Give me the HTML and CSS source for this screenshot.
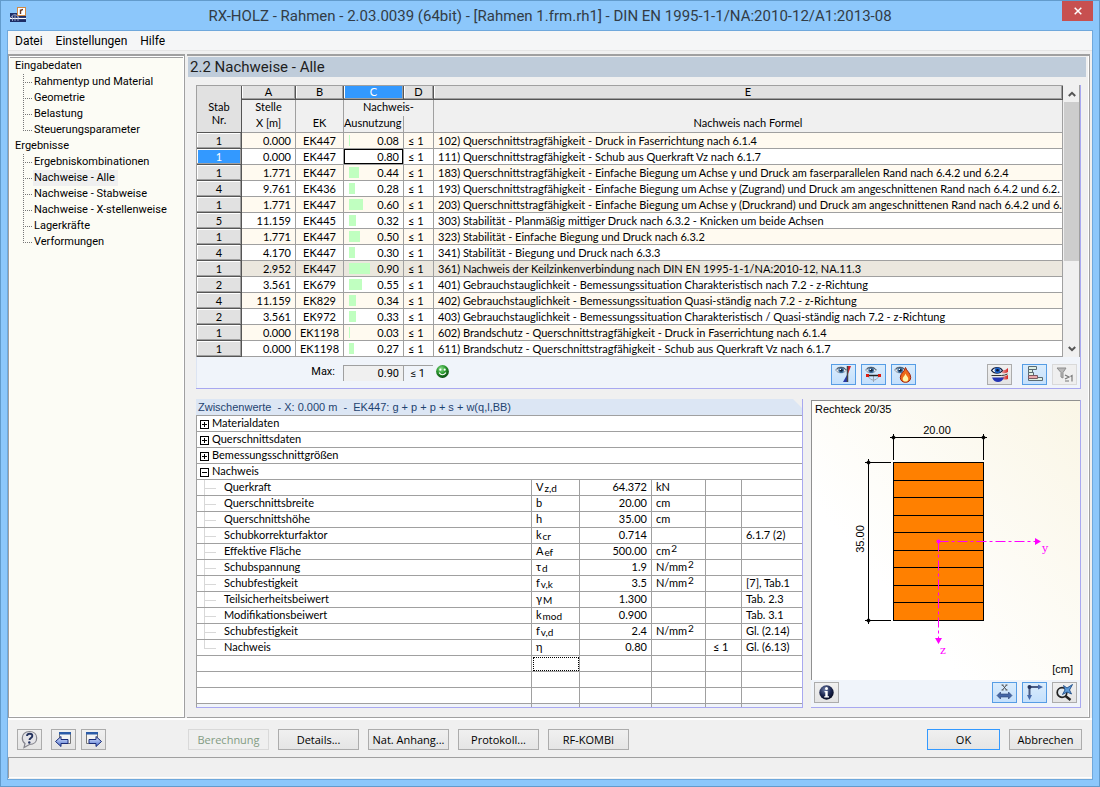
FILE: index.html
```html
<!DOCTYPE html>
<html lang="de">
<head>
<meta charset="utf-8">
<meta name="viewport" content="width=device-width, initial-scale=1">
<title>RX-HOLZ - Rahmen</title>
<link rel="stylesheet" href="styles.css">
</head>
<body>
<svg class="defs" aria-hidden="true">
  <defs>
    <linearGradient id="redfade" x1="0" y1="0" x2="1" y2="0"><stop offset="0" stop-color="#e9b4b4"/><stop offset="1" stop-color="#d62222"/></linearGradient>
    <radialGradient id="ball" cx=".4" cy=".3" r=".7"><stop offset="0" stop-color="#8fe08f"/><stop offset=".5" stop-color="#2c9a30"/><stop offset="1" stop-color="#0b4d10"/></radialGradient>
    <radialGradient id="navy" cx=".4" cy=".3" r=".7"><stop offset="0" stop-color="#6d7da8"/><stop offset=".6" stop-color="#1b2650"/><stop offset="1" stop-color="#060a20"/></radialGradient>
    <linearGradient id="arrow" x1="0" y1="0" x2="0" y2="1"><stop offset="0" stop-color="#e4ecff"/><stop offset="1" stop-color="#4a6fd0"/></linearGradient>
    <g id="eye">
      <path d="M0 4.500C2 1.300 8 .8 10 4.500 8 7.600 2 7.600 0 4.500z" fill="#e6eaee" stroke="#7d8794" stroke-width=".8"/>
      <circle cx="5.200" cy="4.300" r="2.800" fill="#3d6f9e"/><circle cx="5.200" cy="4.300" r="1.400" fill="#111d33"/><circle cx="4.400" cy="3.400" r=".7" fill="#fff"/>
      <path d="M0 3.500C2 .6 8 .3 10.300 4" fill="none" stroke="#3c4654" stroke-width="1"/>
    </g>
  </defs>
</svg>
<div class="window">
  <header class="titlebar">
    <svg class="app-icon" viewBox="0 0 16 16" aria-hidden="true">
      <rect y="6" width="16" height="9" fill="#1c2c66"/><path d="M0 11.500h16" stroke="#fff" stroke-width="1.200"/><path d="M0 11Q5 4 9 11M5 8v6M8 9v5M2.500 9v5" fill="none" stroke="#aeb8d8" stroke-width=".8"/>
      <rect x="7.500" y=".5" width="8" height="8" fill="#fff" stroke="#d08a45"/><path d="M10.500 7V2.500M10.500 4q1-1.500 2.500-1.500" fill="none" stroke="#6b3a24" stroke-width="1.400"/>
    </svg>
    <h1>RX-HOLZ - Rahmen - 2.03.0039 (64bit) - [Rahmen 1.frm.rh1] - DIN EN 1995-1-1/NA:2010-12/A1:2013-08</h1>
    <button class="close" type="button" aria-label="Schließen"><svg viewBox="0 0 8 8" width="8" height="8"><path d="M.7.7l6.600 6.600M7.300.7L.7 7.300" stroke="#fff" stroke-width="1.500"/></svg></button>
  </header>
  <div class="client">
    <nav class="menubar"><button type="button">Datei</button><button type="button">Einstellungen</button><button type="button">Hilfe</button></nav>
    <div class="workspace">
      <nav class="tree">
        <ul>
          <li><a href="#">Eingabedaten</a>
            <ul><li><a href="#">Rahmentyp und Material</a></li><li><a href="#">Geometrie</a></li><li><a href="#">Belastung</a></li><li><a href="#">Steuerungsparameter</a></li></ul></li>
          <li><a href="#">Ergebnisse</a>
            <ul><li><a href="#">Ergebniskombinationen</a></li><li><a href="#" class="current">Nachweise - Alle</a></li><li><a href="#">Nachweise - Stabweise</a></li><li><a href="#">Nachweise - X-stellenweise</a></li><li><a href="#">Lagerkräfte</a></li><li><a href="#">Verformungen</a></li></ul></li>
        </ul>
      </nav>
      <main class="main">
        <h2>2.2 Nachweise - Alle</h2>
        <div class="panels">
          <section class="results">
            <div class="grid-wrap">
              <table class="checks">
                <colgroup><col class="c-stab"><col class="c-x"><col class="c-ek"><col class="c-use"><col class="c-lim"><col></colgroup>
                <thead>
                  <tr class="letters"><th class="stab" rowspan="3">Stab<br>Nr.</th><th>A</th><th>B</th><th class="active">C</th><th>D</th><th>E</th></tr>
                  <tr class="sub"><th>Stelle</th><th></th><th colspan="2">Nachweis-</th><th></th></tr>
                  <tr class="sub last"><th>X [m]</th><th>EK</th><th class="use">Ausnutzung</th><th></th><th>Nachweis nach Formel</th></tr>
                </thead>
                <tbody>
                  <tr><th>1</th><td>0.000</td><td>EK447</td><td><div class="ratio"><i style="width:1px"></i>0.08</div></td><td>≤ 1</td><td>102) Querschnittstragfähigkeit - Druck in Faserrichtung nach 6.1.4</td></tr>
                  <tr><th class="active">1</th><td>0.000</td><td>EK447</td><td class="focus"><div class="ratio"><i style="width:0px"></i>0.80</div></td><td>≤ 1</td><td>111) Querschnittstragfähigkeit - Schub aus Querkraft Vz nach 6.1.7</td></tr>
                  <tr><th>1</th><td>1.771</td><td>EK447</td><td><div class="ratio"><i style="width:10px"></i>0.44</div></td><td>≤ 1</td><td>183) Querschnittstragfähigkeit - Einfache Biegung um Achse y und Druck am faserparallelen Rand nach 6.4.2 und 6.2.4</td></tr>
                  <tr><th>4</th><td>9.761</td><td>EK436</td><td><div class="ratio"><i style="width:6px"></i>0.28</div></td><td>≤ 1</td><td>193) Querschnittstragfähigkeit - Einfache Biegung um Achse y (Zugrand) und Druck am angeschnittenen Rand nach 6.4.2 und 6.2.</td></tr>
                  <tr><th>1</th><td>1.771</td><td>EK447</td><td><div class="ratio"><i style="width:14px"></i>0.60</div></td><td>≤ 1</td><td>203) Querschnittstragfähigkeit - Einfache Biegung um Achse y (Druckrand) und Druck am angeschnittenen Rand nach 6.4.2 und 6.</td></tr>
                  <tr><th>5</th><td>11.159</td><td>EK445</td><td><div class="ratio"><i style="width:7px"></i>0.32</div></td><td>≤ 1</td><td>303) Stabilität - Planmäßig mittiger Druck nach 6.3.2 - Knicken um beide Achsen</td></tr>
                  <tr><th>1</th><td>1.771</td><td>EK447</td><td><div class="ratio"><i style="width:11px"></i>0.50</div></td><td>≤ 1</td><td>323) Stabilität - Einfache Biegung und Druck nach 6.3.2</td></tr>
                  <tr><th>4</th><td>4.170</td><td>EK447</td><td><div class="ratio"><i style="width:6px"></i>0.30</div></td><td>≤ 1</td><td>341) Stabilität - Biegung und Druck nach 6.3.3</td></tr>
                  <tr class="max"><th>1</th><td>2.952</td><td>EK447</td><td><div class="ratio"><i style="width:21px"></i>0.90</div></td><td>≤ 1</td><td>361) Nachweis der Keilzinkenverbindung nach DIN EN 1995-1-1/NA:2010-12, NA.11.3</td></tr>
                  <tr><th>2</th><td>3.561</td><td>EK679</td><td><div class="ratio"><i style="width:13px"></i>0.55</div></td><td>≤ 1</td><td>401) Gebrauchstauglichkeit - Bemessungssituation Charakteristisch nach 7.2 - z-Richtung</td></tr>
                  <tr><th>4</th><td>11.159</td><td>EK829</td><td><div class="ratio"><i style="width:7px"></i>0.34</div></td><td>≤ 1</td><td>402) Gebrauchstauglichkeit - Bemessungssituation Quasi-ständig nach 7.2 - z-Richtung</td></tr>
                  <tr><th>2</th><td>3.561</td><td>EK972</td><td><div class="ratio"><i style="width:7px"></i>0.33</div></td><td>≤ 1</td><td>403) Gebrauchstauglichkeit - Bemessungssituation Charakteristisch / Quasi-ständig nach 7.2 - z-Richtung</td></tr>
                  <tr><th>1</th><td>0.000</td><td>EK1198</td><td><div class="ratio"><i style="width:1px"></i>0.03</div></td><td>≤ 1</td><td>602) Brandschutz - Querschnittstragfähigkeit - Druck in Faserrichtung nach 6.1.4</td></tr>
                  <tr><th>1</th><td>0.000</td><td>EK1198</td><td><div class="ratio"><i style="width:5px"></i>0.27</div></td><td>≤ 1</td><td>611) Brandschutz - Querschnittstragfähigkeit - Schub aus Querkraft Vz nach 6.1.7</td></tr>
                </tbody>
              </table>
              <div class="scrollbar">
                <button type="button" aria-label="Nach oben"><svg viewBox="0 0 8 6" width="8" height="6"><path d="M.8 5L4 1.800 7.200 5" fill="none" stroke="#555" stroke-width="2"/></svg></button>
                <div class="track"><div class="thumb"></div></div>
                <button type="button" aria-label="Nach unten"><svg viewBox="0 0 8 6" width="8" height="6"><path d="M.8 1L4 4.200 7.200 1" fill="none" stroke="#555" stroke-width="2"/></svg></button>
              </div>
            </div>
            <div class="summary">
              <span class="max-label">Max:</span><output class="max-value">0.90</output><output class="max-limit">≤ 1</output>
              <svg class="smile" viewBox="0 0 12 12" width="13" height="13" aria-hidden="true"><circle cx="6" cy="6" r="5.900" fill="url(#ball)"/><circle cx="4" cy="4.300" r="1" fill="#fff"/><circle cx="8" cy="4.300" r="1" fill="#fff"/><path d="M2.800 7q3.200 4 6.400 0" fill="none" stroke="#fff" stroke-width="1"/></svg>
              <div class="tools">
                <button type="button" class="icon-btn on" aria-label="Tragfähigkeit"><svg viewBox="0 0 19 19"><use href="#eye" x="2" y="1"/><path d="M13 1h4l-3 8z" fill="#d8202a"/><path d="M13.500 9v8H9z" fill="#2638a8"/><path d="M13.500 1v16" stroke="#444" stroke-width="1.500"/></svg></button>
                <button type="button" class="icon-btn on" aria-label="Gebrauchstauglichkeit"><svg viewBox="0 0 19 19"><use href="#eye" x="2" y="1"/><path d="M4 11.500Q9.500 19 15 11.500M9.500 11v6" fill="none" stroke="#9aa6b4" stroke-width="1"/><path d="M3 10.500h13" stroke="#222" stroke-width="1.500"/><path d="M2 9h3v3H2zM14 9h3v3h-3z" fill="#dc1c10"/></svg></button>
                <button type="button" class="icon-btn on" aria-label="Brandschutz"><svg viewBox="0 0 19 19"><use href="#eye" x="1" y="1"/><path d="M11.500 2.500c1 3.500 5.200 5.500 5.200 10 0 3-2.200 4.800-5.200 4.800s-5.200-1.800-5.200-4.800c0-4.500 4.700-6 5.200-10z" fill="#ee6a18" stroke="#9c2410" stroke-width="1"/><path d="M11.500 8.500c.5 2 2.800 3.200 2.800 5.500 0 1.600-1.200 2.600-2.800 2.600s-2.800-1-2.800-2.600c0-2.300 2.500-3.500 2.800-5.500z" fill="#fff6a8"/></svg></button>
                <button type="button" class="icon-btn gap-l" aria-label="Ergebnisverlauf"><svg viewBox="0 0 19 19"><path d="M12 5q3 1 6-2v4q-3 2-6 1zM11 12q3 0 7-2v4q-3 1-7 0z" fill="url(#redfade)"/><path d="M2 12.500h12q-2 4.500-6 4.500t-6-4.500z" fill="#2434b4"/><path d="M1.500 5.500C4 1.500 10 1.500 12.500 5.500 10 9 4 9 1.500 5.500z" fill="#fff" stroke="#152040" stroke-width="1.200"/><circle cx="7.500" cy="5.300" r="2.900" fill="#1c62c8"/><circle cx="7.500" cy="5.300" r="1.300" fill="#0a1230"/><path d="M1.500 10.500h10q3 0 6-1.500" fill="none" stroke="#333" stroke-width="1"/></svg></button>
                <button type="button" class="icon-btn on gap-s" aria-label="Relationsbalken"><svg viewBox="0 0 19 19"><path d="M3.500 1.500h8v3h-8zM3.500 4.500h4v3h-4zM3.500 7.500h5v3h-5zM3.500 12.500h14v3h-14z" fill="#dff0e4" stroke="#5a6a72"/><path d="M3.500 10.500h9v3h-9z" fill="#e8a8ac" stroke="#7a5a62"/></svg></button>
                <button type="button" class="icon-btn" disabled aria-label="Überschreitungen filtern"><svg viewBox="0 0 19 19"><path d="M2 3h9L8 7.500V13l-2-1V7.500z" fill="#b9b9b9" stroke="#8d8d8d"/><path d="M10 10l4 2-4 2M10 16h4M15.500 11.500l1.500-1V16.500" fill="none" stroke="#777" stroke-width="1.200"/></svg></button>
              </div>
            </div>
          </section>
          <div class="lower">
            <section class="details">
              <h3>Zwischenwerte&nbsp; - X: 0.000 m&nbsp; -&nbsp; EK447: g + p + p + s + w(q,l,BB)</h3>
              <table class="values">
                <colgroup><col><col class="v-sym"><col class="v-val"><col class="v-unit"><col class="v-lim"><col class="v-ref"></colgroup>
                <tbody>
                  <tr class="group"><td colspan="6"><button type="button" class="plus" aria-label="Öffnen"></button>Materialdaten</td></tr>
                  <tr class="group"><td colspan="6"><button type="button" class="plus" aria-label="Öffnen"></button>Querschnittsdaten</td></tr>
                  <tr class="group"><td colspan="6"><button type="button" class="plus" aria-label="Öffnen"></button>Bemessungsschnittgrößen</td></tr>
                  <tr class="group"><td colspan="6"><button type="button" aria-label="Schließen"></button>Nachweis</td></tr>
                  <tr class="item"><td>Querkraft</td><td>V<sub>z,d</sub></td><td>64.372</td><td>kN</td><td></td><td></td></tr>
                  <tr class="item"><td>Querschnittsbreite</td><td>b</td><td>20.00</td><td>cm</td><td></td><td></td></tr>
                  <tr class="item"><td>Querschnittshöhe</td><td>h</td><td>35.00</td><td>cm</td><td></td><td></td></tr>
                  <tr class="item"><td>Schubkorrekturfaktor</td><td>k<sub>cr</sub></td><td>0.714</td><td></td><td></td><td>6.1.7 (2)</td></tr>
                  <tr class="item"><td>Effektive Fläche</td><td>A<sub>ef</sub></td><td>500.00</td><td>cm<sup>2</sup></td><td></td><td></td></tr>
                  <tr class="item"><td>Schubspannung</td><td>τ<sub>d</sub></td><td>1.9</td><td>N/mm<sup>2</sup></td><td></td><td></td></tr>
                  <tr class="item"><td>Schubfestigkeit</td><td>f<sub>v,k</sub></td><td>3.5</td><td>N/mm<sup>2</sup></td><td></td><td>[7], Tab.1</td></tr>
                  <tr class="item"><td>Teilsicherheitsbeiwert</td><td>γ<sub>M</sub></td><td>1.300</td><td></td><td></td><td>Tab. 2.3</td></tr>
                  <tr class="item"><td>Modifikationsbeiwert</td><td>k<sub>mod</sub></td><td>0.900</td><td></td><td></td><td>Tab. 3.1</td></tr>
                  <tr class="item"><td>Schubfestigkeit</td><td>f<sub>v,d</sub></td><td>2.4</td><td>N/mm<sup>2</sup></td><td></td><td>Gl. (2.14)</td></tr>
                  <tr class="item end"><td>Nachweis</td><td>η</td><td>0.80</td><td></td><td>≤ 1</td><td>Gl. (6.13)</td></tr>
                  <tr><td></td><td class="cursor"></td><td></td><td></td><td></td><td></td></tr>
                  <tr><td></td><td></td><td></td><td></td><td></td><td></td></tr>
                  <tr><td></td><td></td><td></td><td></td><td></td><td></td></tr>
                  <tr class="stub"><td></td><td></td><td></td><td></td><td></td><td></td></tr>
                </tbody>
              </table>
            </section>
            <section class="section-view">
              <svg class="drawing" viewBox="0 0 268 279" role="img" aria-label="Rechteck 20/35">
                <text x="3" y="12">Rechteck 20/35</text>
                <g class="lines">
                  <path class="wood" d="M81.500 61.500h90v158h-90z"/>
                  <path d="M81.500 79.500h90M81.500 96.500h90M81.500 114.500h90M81.500 131.500h90M81.500 149.500h90M81.500 166.500h90M81.500 184.500h90M81.500 201.500h90"/>
                  <path d="M78 36.500h97M81.500 33v26M171.500 33v26M56.500 58v165M53 61.500h26M53 219.500h26"/>
                </g>
                <path d="M81.500 34l2.500 2.500-2.500 2.500-2.500-2.500zM171.500 34l2.500 2.500-2.500 2.500-2.500-2.500zM56.500 59l2.500 2.500-2.500 2.500-2.500-2.500zM56.500 217l2.500 2.500-2.500 2.500-2.500-2.500z"/>
                <text x="125" y="33" text-anchor="middle">20.00</text>
                <text x="52" y="138" text-anchor="middle" transform="rotate(-90 52 138)">35.00</text>
                <g class="axes"><path class="dash" d="M126.500 140.500H224M126.500 140.500V238"/><circle cx="126.500" cy="140.500" r="2"/><path d="M223 137l6 3.500-6 3.500zM123 237h7l-3.500 6z"/><text x="230" y="151">y</text><text x="128" y="253">z</text></g>
                <text x="261" y="272" text-anchor="end">[cm]</text>
              </svg>
              <div class="view-tools">
                <button type="button" class="icon-btn info" aria-label="Info"><svg viewBox="0 0 19 19"><circle cx="9.500" cy="9.500" r="7.200" fill="url(#navy)"/><circle cx="9.500" cy="5.500" r="1.500" fill="#fff"/><path d="M7.500 8h3.200v5.200H12v1.300H7.200v-1.300h1.100V9.300h-.8z" fill="#fff"/></svg></button>
                <button type="button" class="icon-btn on" aria-label="Bemaßung"><svg viewBox="0 0 19 19"><path d="M7.500 2l4 5M11.500 2l-4 5M6.500 2h2M10.500 2h2M6.500 7h2M10.500 7h2" stroke="#444" stroke-width=".9"/><path d="M2 12.500l3.500-3.500v2h8V9l3.500 3.500-3.500 3.500v-2h-8v2z" fill="#4568a8" stroke="#2a4070" stroke-width=".6"/></svg></button>
                <button type="button" class="icon-btn on" aria-label="Hauptachsen"><svg viewBox="0 0 19 19"><path d="M4 4h10M4.500 4v10" stroke="#4a5c84" stroke-width="2" fill="none"/><path d="M13 1.500l5 2.500-5 2.500zM2 12h5l-2.500 5z" fill="#4568a8"/><circle cx="4.500" cy="4" r="2" fill="#26345c"/></svg></button>
                <button type="button" class="icon-btn" aria-label="Ansicht zurücksetzen"><svg viewBox="0 0 19 19"><circle cx="7" cy="9.500" r="4.800" fill="#e2eaf0" stroke="#222" stroke-width="1.700"/><path d="M10.500 13l5 4" stroke="#222" stroke-width="2.400"/><path d="M17.500 1.500L12 5 8.500 2.500 10 7 7.500 11.500 12 9l4.500 2L14.500 7z" fill="#5b9bd8" stroke="#1f4d88" stroke-width=".9"/></svg></button>
              </div>
            </section>
          </div>
        </div>
      </main>
    </div>
    <footer class="actions">
      <button type="button" class="icon-btn" aria-label="Hilfe"><svg viewBox="0 0 19 19"><path d="M9.500 1.500c4.500 0 7.200 2.800 7.200 6.500s-2.700 6.500-7.200 6.500L4 17.500l1-4C3.200 12.300 2.300 10.300 2.300 8c0-3.700 2.700-6.500 7.200-6.500z" fill="#e4e4e8" stroke="#85858d" stroke-width="1.200"/><path d="M7 6q.2-2.300 2.800-2.300T12.300 6c0 2-2.800 2-2.800 4" fill="none" stroke="#24325e" stroke-width="1.900"/><circle cx="9.300" cy="12.500" r="1.200" fill="#24325e"/></svg></button>
      <button type="button" class="icon-btn gap-n" aria-label="Zurück"><svg viewBox="0 0 19 19"><path d="M5.500 2.500h11v11h-11z" fill="#f4f4f4" stroke="#777"/><path d="M5 2h12v2.500H5z" fill="#2c5ca8"/><path d="M1.500 11.500l5.500-5v3h7v4H7v3z" fill="url(#arrow)" stroke="#1a2c78"/></svg></button>
      <button type="button" class="icon-btn" aria-label="Weiter"><svg viewBox="0 0 19 19"><path d="M2.500 2.500h11v11h-11z" fill="#f4f4f4" stroke="#777"/><path d="M2 2h12v2.500H2z" fill="#2c5ca8"/><path d="M17.500 11.500l-5.500-5v3H5v4h7v3z" fill="url(#arrow)" stroke="#1a2c78"/></svg></button>
      <div class="commands">
        <button type="button" class="btn" disabled>Berechnung</button><button type="button" class="btn">Details...</button><button type="button" class="btn">Nat. Anhang...</button><button type="button" class="btn">Protokoll...</button><button type="button" class="btn">RF-KOMBI</button>
      </div>
      <div class="confirm"><button type="button" class="btn default">OK</button><button type="button" class="btn">Abbrechen</button></div>
    </footer>
    <div class="statusbar"></div>
  </div>
</div>
</body>
</html>
```
FILE: styles.css
```css
* { box-sizing: border-box; }
body { margin: 0; font: 11px/16px Roboto, "Liberation Sans", sans-serif; color: #000; }
h1, h2, h3, ul { margin: 0; padding: 0; font-weight: normal; }
ul { list-style: none; }
button { font: inherit; color: inherit; margin: 0; padding: 0; border: 0; background: none; }
a { color: inherit; text-decoration: none; }
.defs { position: absolute; width: 0; height: 0; }

.window { display: flex; flex-direction: column; min-height: 100vh; padding: 0 6px 6px; border: 1px solid #629bcc; background: #8cc7fb; }
.titlebar { display: flex; height: 29px; align-items: flex-start; }
.app-icon { flex: none; width: 16px; height: 16px; margin: 6px 0 0 3px; }
.titlebar h1 { flex: 1; padding: 5px 0 0 12px; text-align: center; font-size: 15px; line-height: 20px; color: #323c46; }
.close { display: flex; align-items: center; justify-content: center; width: 31px; height: 20px; background: #c75050; }
.client { flex: 1; display: flex; flex-direction: column; border: 1px solid #6fa8dc; background: #f0f0f0; }

.menubar { display: flex; gap: 13px; height: 20px; padding: 0 7px; background: #f5f6f7; border-bottom: 1px solid #e4e4e4; font-size: 12px; line-height: 20px; }
.workspace { flex: 1; display: grid; grid-template-columns: 177px minmax(0, 1fr); column-gap: 2px; margin-top: 3px; padding-right: 2px; border-bottom: 2px solid #fff; }

.tree { padding: 2px 5px; border: 1px solid #a0a0a0; border-top: 2px solid #a0a0a0; background: #fcfcf5; box-shadow: inset 0 0 0 1px #fff, inset 0 2px 0 0 #a0a0a0; }
.tree a { padding: 0 3px 0 1px; }
.tree > ul > li > a { padding: 0 1px; }
.tree ul ul { padding-left: 9px; }
.tree ul ul li { display: flex; }
.tree ul ul li::before { content: ""; width: 10px; height: 16px; background: repeating-linear-gradient(90deg, #777 0 1px, transparent 1px 2px) 0 8px / 9px 1px no-repeat, repeating-linear-gradient(#777 0 1px, transparent 1px 2px) 0 0 / 1px 100% no-repeat; }
.tree ul ul li:last-child::before { background-size: 9px 1px, 1px 9px; }
.tree .current { background: #f0f0f0; }

.main { border: 1px solid #a0a0a0; border-width: 2px 1px 1px 0; box-shadow: inset -1px 0 0 #fff; padding: 1px 3px 9px 1px; }
.main h2 { height: 20px; padding-left: 2px; background: #bfccda; color: #1e1e1e; font-size: 15px; line-height: 21px; }
.panels { display: flex; flex-direction: column; gap: 10px; padding: 8px 5px 0 8px; }

.results { border-right: 1px solid #a8a8f0; border-bottom: 1px solid #a8a8f0; }
.grid-wrap { display: flex; background: #f0f0f0; }
table { border-collapse: separate; border-spacing: 0; table-layout: fixed; font-family: Lato, "Liberation Sans", sans-serif; }
th { font-weight: normal; }
th, td { padding: 0; overflow: hidden; white-space: nowrap; }
.checks { flex: 1; min-width: 0; border: 1px solid #a0a0a0; border-width: 1px 0 0 1px; }
.c-stab { width: 45px; } .c-x { width: 54px; } .c-ek { width: 48px; } .c-use { width: 60px; } .c-lim { width: 30px; }
.checks thead th { height: 16px; padding-bottom: 3px; line-height: 12px; border-right: 1px solid #a0a0a0; background: #f0f0f0; text-align: center; }
.checks .letters th { height: 14px; padding-bottom: 1px; line-height: 12px; border-right: 1px solid #555; border-bottom: 1px solid #555; background: #e1e1e1; box-shadow: inset -1px -1px 0 #a0a0a0, inset 1px 0 0 #fff; }
.checks .letters th.stab { padding: 8px 0 0; border-color: #555; box-shadow: none; line-height: 13px; }
.checks .sub.last th { height: 17px; border-bottom: 1px solid #a0a0a0; }
.checks .sub .use { text-align: left; }
.checks .letters th.active, .checks tbody th.active { background: #3399ff; color: #fff; }
.checks tbody th { height: 16px; line-height: 15px; border-right: 1px solid #555; border-bottom: 1px solid #555; background: #e1e1e1; box-shadow: inset -1px -1px 0 #a0a0a0, inset 1px 1px 0 #fff; text-align: center; }
.checks td { height: 16px; line-height: 15px; border-right: 1px solid #a0a0a0; border-bottom: 1px solid #a0a0a0; background: #fff; }
.checks tbody tr:nth-child(odd) td { background: #fffaf0; }
.checks tbody tr.max td { background: #ebe7de; }
.checks td:nth-child(2), .checks td:nth-child(4) { padding-right: 4px; text-align: right; }
.checks td:nth-child(3) { text-align: center; }
.checks td:nth-child(5) { padding-left: 4px; }
.checks td:nth-child(6) { padding-left: 4px; }
.ratio { display: flex; align-items: center; justify-content: space-between; padding-left: 5px; }
.ratio i { height: 11px; background: #c0ffc0; }
.checks td.focus { box-shadow: inset 0 0 0 1px #000; }
.scrollbar { display: flex; flex-direction: column; width: 17px; padding-left: 1px; border-right: 1px solid #a0a0a0; }
.scrollbar button { display: flex; align-items: center; justify-content: center; height: 17px; }
.track { flex: 1; }
.thumb { height: 67%; background: #cdcdcd; }

.summary { display: flex; align-items: flex-start; height: 31px; padding: 7px 3px 0 0; background: #f0f4fa; border-left: 1px solid #dce4f2; }
.max-label { width: 146px; padding-right: 8px; text-align: right; font-size: 11px; }
.max-value, .max-limit { height: 16px; margin-top: 1px; border: 1px solid #a0a0a0; border-width: 1px 0 0 1px; background: #f0f0f0; line-height: 15px; text-align: right; padding-right: 4px; }
.max-value { width: 60px; }
.max-limit { width: 30px; background: #f0f4fa; padding-right: 8px; }
.smile { margin: 1px 0 0 3px; }
.tools { display: flex; gap: 5px; margin-left: auto; }
.icon-btn { display: flex; align-items: center; justify-content: center; flex: none; width: 25px; height: 21px; border: 1px solid #acacac; background: linear-gradient(#f0f0f0, #e4e4e4); }
.icon-btn svg { width: 19px; height: 19px; }
.icon-btn.on { border-color: #569de5; background: linear-gradient(#daecfc, #c4e0fc); }
.icon-btn:disabled { border-color: #d9d9d9; background: #efefef; }
.gap-l { margin-left: 66px; } .gap-s { margin-left: 5px; } .gap-n { margin-left: 4px; }

.lower { display: grid; grid-template-columns: minmax(0, 1fr) 270px; column-gap: 8px; }
.details { display: flex; flex-direction: column; border: 1px solid #a8a8f0; border-width: 0 1px 1px 0; }
.details h3 { height: 16px; padding-left: 2px; background: #dce6f4; clip-path: polygon(0 0, calc(100% - 9px) 0, 100% 9px, 100% 100%, 0 100%); color: #1f4370; font: 11px/16px "Liberation Sans", sans-serif; }
.values { width: 100%; background: #fff; border: 1px solid #a0a0a0; border-width: 1px 0 0 1px; }
.v-sym { width: 48px; } .v-val { width: 72px; } .v-unit { width: 54px; } .v-lim { width: 36px; } .v-ref { width: 60px; }
.values td { height: 16px; padding: 0 0 2px 4px; line-height: 13px; border: 1px solid #a0a0a0; border-width: 0 1px 1px 0; }
.values td:last-child { border-right: 0; }
.values .group td { padding-left: 3px; }
.values .group button { display: inline-block; width: 9px; height: 9px; margin-right: 3px; border: 1px solid #000; vertical-align: -1px; background: linear-gradient(#000, #000) center / 5px 1px no-repeat #fff; }
.values .group button.plus { background: linear-gradient(#000, #000) center / 5px 1px no-repeat, linear-gradient(#000, #000) center / 1px 5px no-repeat #fff; }
.values .item td:first-child { padding-left: 27px; background: linear-gradient(#d8d8d8, #d8d8d8) 7px 8px / 12px 1px no-repeat, linear-gradient(#d8d8d8, #d8d8d8) 7px 0 / 1px 100% no-repeat; }
.values .item.end td:first-child { background-size: 12px 1px, 1px 8px; }
.values .item td:nth-child(3) { padding-right: 4px; text-align: right; }
.values .item td:nth-child(5) { padding-left: 7px; }
.values td.cursor { outline: 1px dotted #000; outline-offset: -2px; }
.values tr.stub td { height: 3px; padding: 0; border-bottom: 0; background: #f0f4fa; }
.values sub, .values sup { padding-left: 1px; font-size: 10px; line-height: 0; }
.values sub { vertical-align: -1px; }
.values sup { vertical-align: 3px; }

.section-view { display: flex; flex-direction: column; margin-top: 1px; border: 1px solid #a8a8f0; border-width: 0 1px 1px 0; background: #f0f4fa; }
.drawing { flex: 1; width: 100%; border: 1px solid #909090; border-width: 1px 0 0 1px; background: linear-gradient(50deg, #fff 30%, #faf6e6); font: 11px "Liberation Sans", sans-serif; }
.lines { fill: none; stroke: #000; shape-rendering: crispEdges; }
.lines .wood { fill: #ff8000; }
.axes { fill: #f0f; font: 11px "DejaVu Serif", serif; }
.dash { fill: none; stroke: #f0f; stroke-dasharray: 10 3 3 3; }
.view-tools { display: flex; gap: 5px; padding: 2px 3px 4px; }
.info { margin-right: auto; }

.actions { display: flex; gap: 5px; padding: 9px 10px 7px 9px; }
.commands { display: flex; gap: 9px; margin-left: 77px; }
.confirm { display: flex; gap: 9px; margin-left: auto; }
.btn { width: 81px; height: 21px; border: 1px solid #acacac; background: linear-gradient(#f0f0f0, #e5e5e5); font-family: "Open Sans", sans-serif; line-height: 19px; white-space: nowrap; }
.confirm .btn { width: 73px; }
.btn:disabled { border-color: #d9d9d9; background: #efefef; color: #839b83; }
.btn.default { border-color: #3399ff; }
.statusbar { height: 21px; margin-bottom: 1px; border: 1px solid #a0a0a0; border-width: 1px 0 0 1px; box-shadow: inset 0 -1px 0 #fff; }
```
